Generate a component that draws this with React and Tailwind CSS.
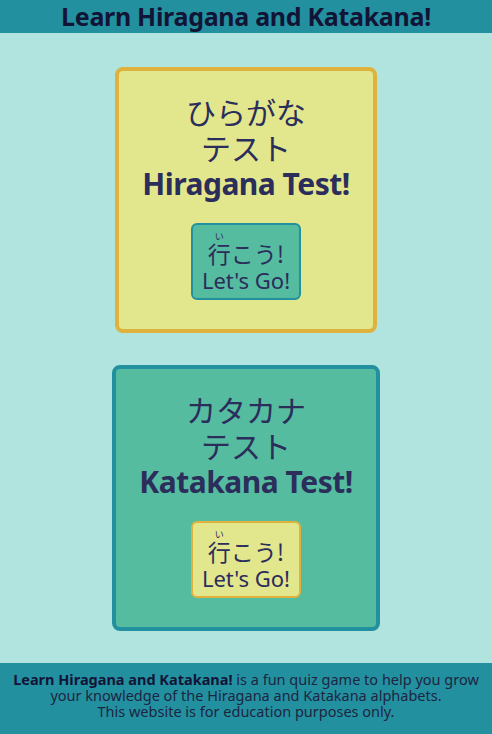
import React from 'react'

const jp = { fontFamily: '"Noto Sans CJK JP", "Noto Sans", sans-serif' }

const Card = ({ kana, title, cardClass, btnClass }) => (
  <div className={`inline-flex flex-col items-center rounded-lg border-4 px-[23px] pt-[22px] pb-[29px] ${cardClass}`}>
    <h2 className="text-center text-[30px] leading-[36px] text-[#2b2d5b]" style={jp}>
      {kana}
      <br />
      テスト
    </h2>
    <p className="text-[30px] leading-[37px] font-bold tracking-[-0.5px] text-[#2b2d5b]">{title}</p>
    <button className={`mt-[21px] flex flex-col items-center rounded-md border-2 px-[9px] pt-[7px] pb-[4px] text-[#2b2d5b] ${btnClass}`}>
      <span className="block text-[23px] leading-[28px]" style={jp}>
        <ruby>
          行<rt className="text-[9px] leading-[9px]">い</rt>
        </ruby>
        こう!
      </span>
      <span className="block text-[22px] leading-[27px]">Let's Go!</span>
    </button>
  </div>
)

export default function App() {
  return (
    <div className="flex min-h-[734px] flex-col bg-[#b1e4df]" style={{ fontFamily: '"Noto Sans", sans-serif' }}>
      <header className="flex h-[33px] items-center justify-center bg-[#2390a0]">
        <h1 className="text-[25px] font-bold tracking-[-0.3px] text-[#121436]">Learn Hiragana and Katakana!</h1>
      </header>
      <main className="flex flex-1 flex-col items-center gap-[32px] pt-[34px] pb-[32px]">
        <Card kana="ひらがな" title="Hiragana Test!" cardClass="border-[#deb23c] bg-[#e2e68c]" btnClass="border-[#2390a0] bg-[#55bca0]" />
        <Card kana="カタカナ" title="Katakana Test!" cardClass="border-[#2390a0] bg-[#55bca0]" btnClass="border-[#deb23c] bg-[#e2e68c]" />
      </main>
      <footer className="bg-[#2390a0] px-2 pt-[8px] pb-[15px] text-center text-[14.5px] leading-[16px] text-[#1d2540]">
        <b className="text-[#121436]">Learn Hiragana and Katakana!</b> is a fun quiz game to help you grow
        <br />
        your knowledge of the Hiragana and Katakana alphabets.
        <br />
        This website is for education purposes only.
      </footer>
    </div>
  )
}
